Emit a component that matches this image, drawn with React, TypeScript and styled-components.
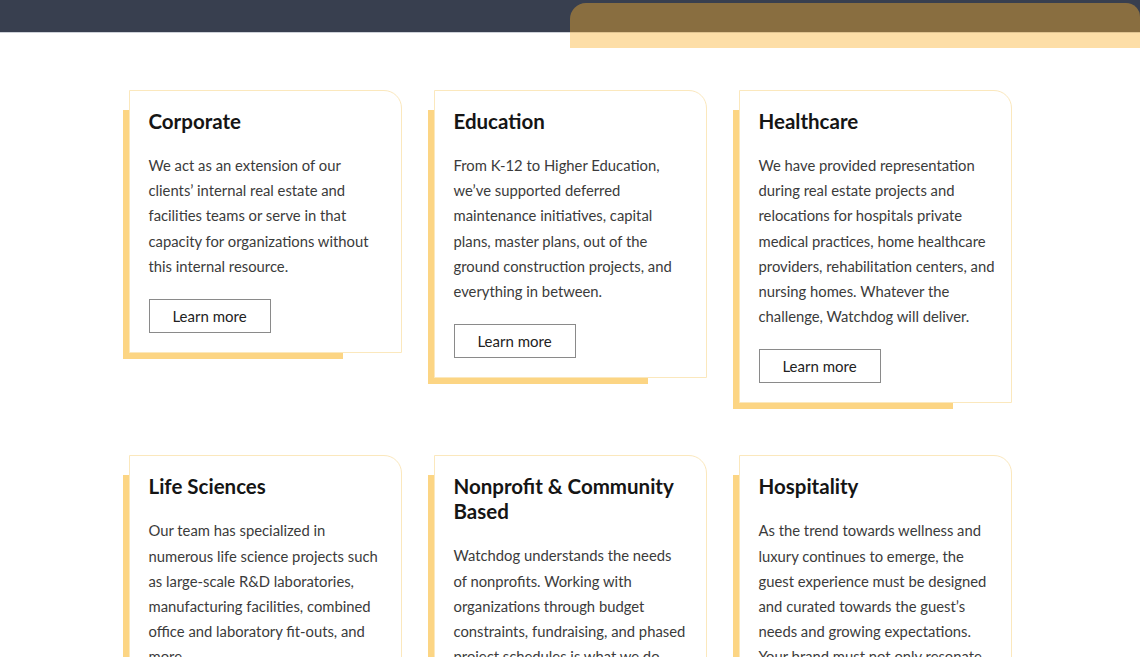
import React from "react";
import styled, { createGlobalStyle } from "styled-components";

const Global = createGlobalStyle`
  html, body { margin: 0; padding: 0; background: #ffffff; }
  body { font-family: "Lato", "Liberation Sans", sans-serif; -webkit-font-smoothing: antialiased; }
  * { box-sizing: border-box; }
`;

const Page = styled.div`
  width: 1140px;
  height: 657px;
  overflow: hidden;
  position: relative;
`;

const TopBar = styled.header`
  height: 33px;
  background: #383f4f;
  border-bottom: 1px solid #cdd1d8;
`;

const Ribbon = styled.div`
  position: absolute;
  left: 570px;
  top: 3px;
  width: 570px;
  height: 45px;
  border-radius: 16px 14px 0 0;
  background: rgba(250, 176, 46, 0.42);
`;

const Grid = styled.main`
  display: grid;
  grid-template-columns: 273px 273px 273px;
  column-gap: 32px;
  row-gap: 52px;
  justify-content: center;
  align-items: start;
  padding-top: 57px;
`;

const Card = styled.article`
  position: relative;
  background: #ffffff;
  border: 1px solid #fbe8bd;
  border-radius: 0 18px 0 0;
  padding: 18px 19px 19px 19px;
  &::before {
    content: "";
    position: absolute;
    left: -7px;
    top: 19px;
    bottom: -7px;
    right: 58px;
    background: #fcd584;
    z-index: -1;
  }
`;

const Title = styled.h2`
  margin: 0 0 19px;
  font-size: 20.5px;
  line-height: 25px;
  font-weight: 700;
  color: #151515;
`;

const Body = styled.p`
  margin: 0;
  font-size: 14.8px;
  line-height: 25.2px;
  color: #3b3b3b;
`;

const Line = styled.span`
  display: block;
  white-space: nowrap;
`;

const Button = styled.a`
  display: inline-flex;
  align-items: center;
  justify-content: center;
  margin-top: 20px;
  width: 122px;
  height: 34px;
  border: 1px solid #8a8a8a;
  font-size: 15px;
  color: #222;
  text-decoration: none;
  cursor: pointer;
`;

const Wrap = styled.div`
  position: relative;
  z-index: 0;
`;

const items: { title: string; lines: string[] }[] = [
  {
    title: "Corporate",
    lines: [
      "We act as an extension of our",
      "clients’ internal real estate and",
      "facilities teams or serve in that",
      "capacity for organizations without",
      "this internal resource.",
    ],
  },
  {
    title: "Education",
    lines: [
      "From K-12 to Higher Education,",
      "we’ve supported deferred",
      "maintenance initiatives, capital",
      "plans, master plans, out of the",
      "ground construction projects, and",
      "everything in between.",
    ],
  },
  {
    title: "Healthcare",
    lines: [
      "We have provided representation",
      "during real estate projects and",
      "relocations for hospitals private",
      "medical practices, home healthcare",
      "providers, rehabilitation centers, and",
      "nursing homes. Whatever the",
      "challenge, Watchdog will deliver.",
    ],
  },
  {
    title: "Life Sciences",
    lines: [
      "Our team has specialized in",
      "numerous life science projects such",
      "as large-scale R&D laboratories,",
      "manufacturing facilities, combined",
      "office and laboratory fit-outs, and",
      "more.",
    ],
  },
  {
    title: "Nonprofit & Community Based",
    lines: [
      "Watchdog understands the needs",
      "of nonprofits. Working with",
      "organizations through budget",
      "constraints, fundraising, and phased",
      "project schedules is what we do",
      "best.",
    ],
  },
  {
    title: "Hospitality",
    lines: [
      "As the trend towards wellness and",
      "luxury continues to emerge, the",
      "guest experience must be designed",
      "and curated towards the guest’s",
      "needs and growing expectations.",
      "Your brand must not only resonate",
      "with guests, but also deliver.",
    ],
  },
];

export default function App() {
  return (
    <Page>
      <Global />
      <TopBar />
      <Ribbon />
      <Wrap>
        <Grid>
          {items.map((it) => (
            <Card key={it.title}>
              <Title>{it.title}</Title>
              <Body>
                {it.lines.map((l) => (
                  <Line key={l}>{l}</Line>
                ))}
              </Body>
              <Button>Learn more</Button>
            </Card>
          ))}
        </Grid>
      </Wrap>
    </Page>
  );
}
